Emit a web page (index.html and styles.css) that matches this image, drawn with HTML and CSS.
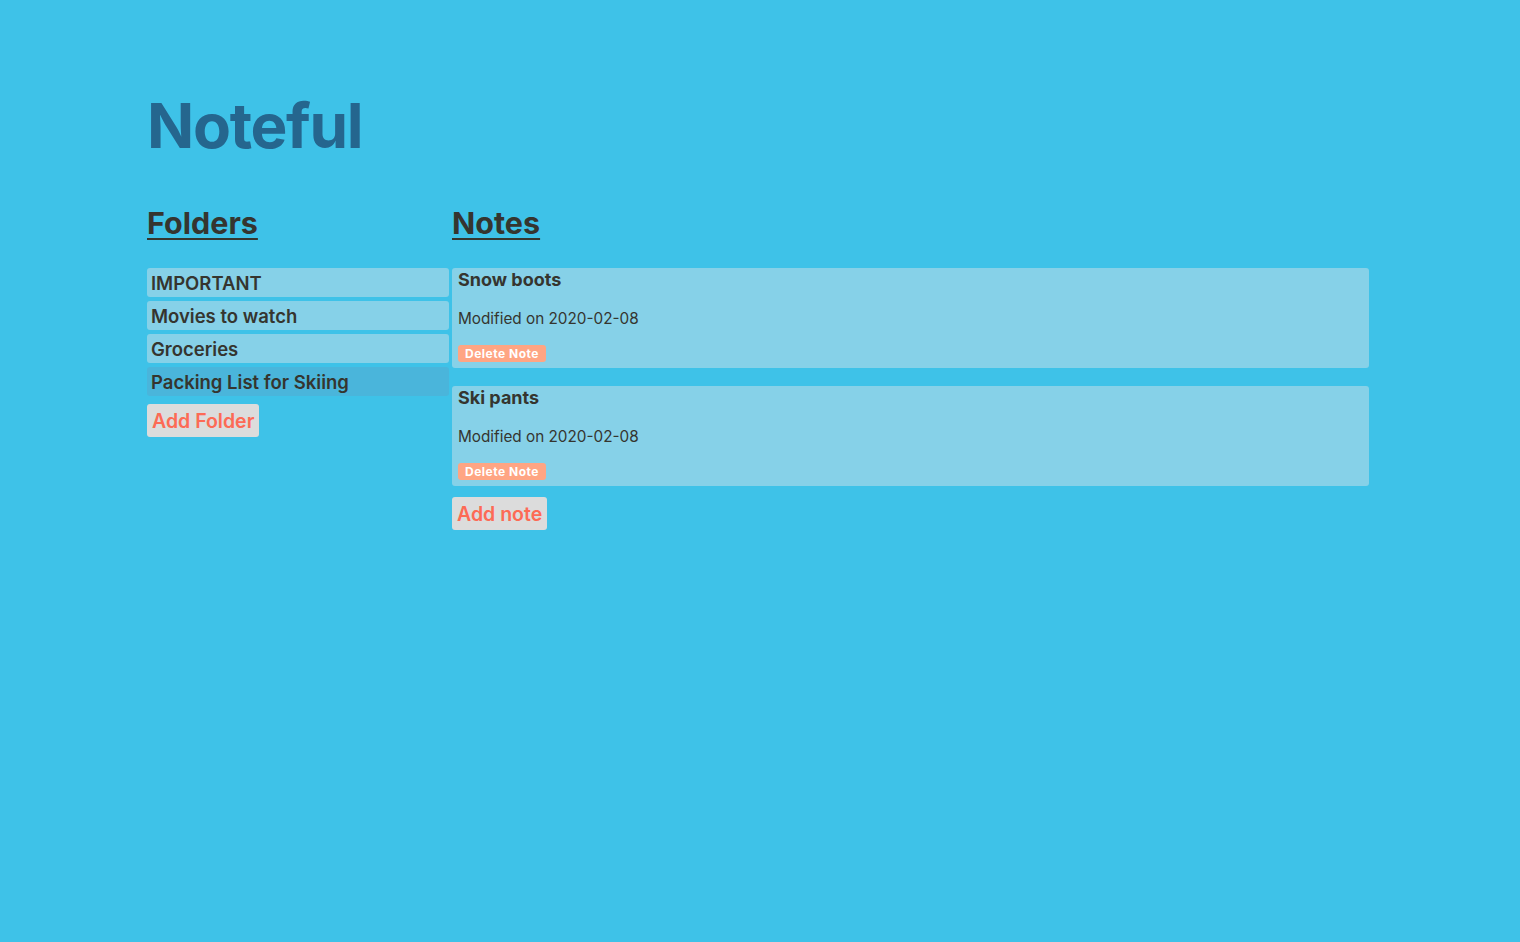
FILE: index.html
```html
<!DOCTYPE html>
<html lang="en">
<head>
<meta charset="utf-8">
<title>Noteful</title>
<link rel="stylesheet" href="styles.css">
</head>
<body>
<div class="app">
  <header class="app-header">
    <h1 class="app-title">Noteful</h1>
  </header>
  <div class="columns">
    <nav class="sidebar">
      <h2 class="section-title">Folders</h2>
      <ul class="folder-list">
        <li class="folder">IMPORTANT</li>
        <li class="folder">Movies to watch</li>
        <li class="folder">Groceries</li>
        <li class="folder folder-active">Packing List for Skiing</li>
      </ul>
      <button class="add-btn">Add Folder</button>
    </nav>
    <main class="main">
      <h2 class="section-title">Notes</h2>
      <ul class="note-list">
        <li class="note">
          <h3 class="note-title">Snow boots</h3>
          <p class="note-date">Modified on 2020-02-08</p>
          <button class="delete-btn">Delete Note</button>
        </li>
        <li class="note">
          <h3 class="note-title">Ski pants</h3>
          <p class="note-date">Modified on 2020-02-08</p>
          <button class="delete-btn">Delete Note</button>
        </li>
      </ul>
      <button class="add-btn">Add note</button>
    </main>
  </div>
</div>
</body>
</html>
```

FILE: styles.css
```css
html, body {
  margin: 0;
  padding: 0;
  height: 100%;
}
body {
  background: #3ec2e8;
  font-family: Inter, "Noto Sans", "Liberation Sans", sans-serif;
  color: #35352f;
}
.app {
  width: 1222px;
  padding-left: 147px;
  padding-top: 86px;
}
.app-header {
  margin: 0;
}
.app-title {
  margin: 0;
  font-size: 62px;
  line-height: 80px;
  font-weight: 700;
  color: #25668e;
  letter-spacing: -1.3px;
}
.columns {
  display: flex;
  gap: 3px;
  margin-top: 36px;
}
.sidebar {
  width: 302px;
  flex: none;
  display: flex;
  flex-direction: column;
  align-items: flex-start;
}
.main {
  flex: 1;
  display: flex;
  flex-direction: column;
  align-items: flex-start;
}
.section-title {
  margin: 0;
  font-size: 30.5px;
  line-height: 42px;
  font-weight: 700;
  text-decoration: underline;
  text-decoration-thickness: 2px;
  text-underline-offset: 4px;
  color: #35352f;
  height: 66px;
}
.folder-list, .note-list {
  list-style: none;
  margin: 0;
  padding: 0;
  width: 100%;
}
.folder-list {
  display: flex;
  flex-direction: column;
  gap: 4px;
}
.folder {
  background: #86d1e8;
  border-radius: 3px;
  height: 29px;
  line-height: 31px;
  padding-left: 4px;
  font-size: 18.5px;
  font-weight: 600;
}
.folder-active {
  background: #4ab5db;
}
.add-btn {
  background: #dcdcdc;
  border: none;
  border-radius: 3px;
  color: #fd6a55;
  font-family: inherit;
  font-size: 19.5px;
  font-weight: 600;
  padding: 0 5px;
  height: 33px;
  line-height: 34px;
  cursor: pointer;
}
.sidebar .add-btn {
  margin-top: 8px;
}
.main .add-btn {
  margin-top: 11px;
}
.note-list {
  display: flex;
  flex-direction: column;
  gap: 18px;
}
.note {
  background: #86d1e8;
  border-radius: 3px;
  height: 100px;
  box-sizing: border-box;
  padding: 1px 6px 0;
}
.note-title {
  margin: 0;
  font-size: 18px;
  line-height: 22px;
  font-weight: 700;
}
.note-date {
  margin: 18px 0 0;
  font-size: 15.3px;
  line-height: 20px;
  font-weight: 400;
}
.delete-btn {
  display: block;
  margin-top: 16px;
  background: #ffa583;
  border: none;
  border-radius: 3px;
  color: #ffffff;
  font-family: inherit;
  font-size: 12px;
  font-weight: 700;
  height: 17px;
  line-height: 17px;
  padding: 0 7px;
  letter-spacing: 0.5px;
}
```
